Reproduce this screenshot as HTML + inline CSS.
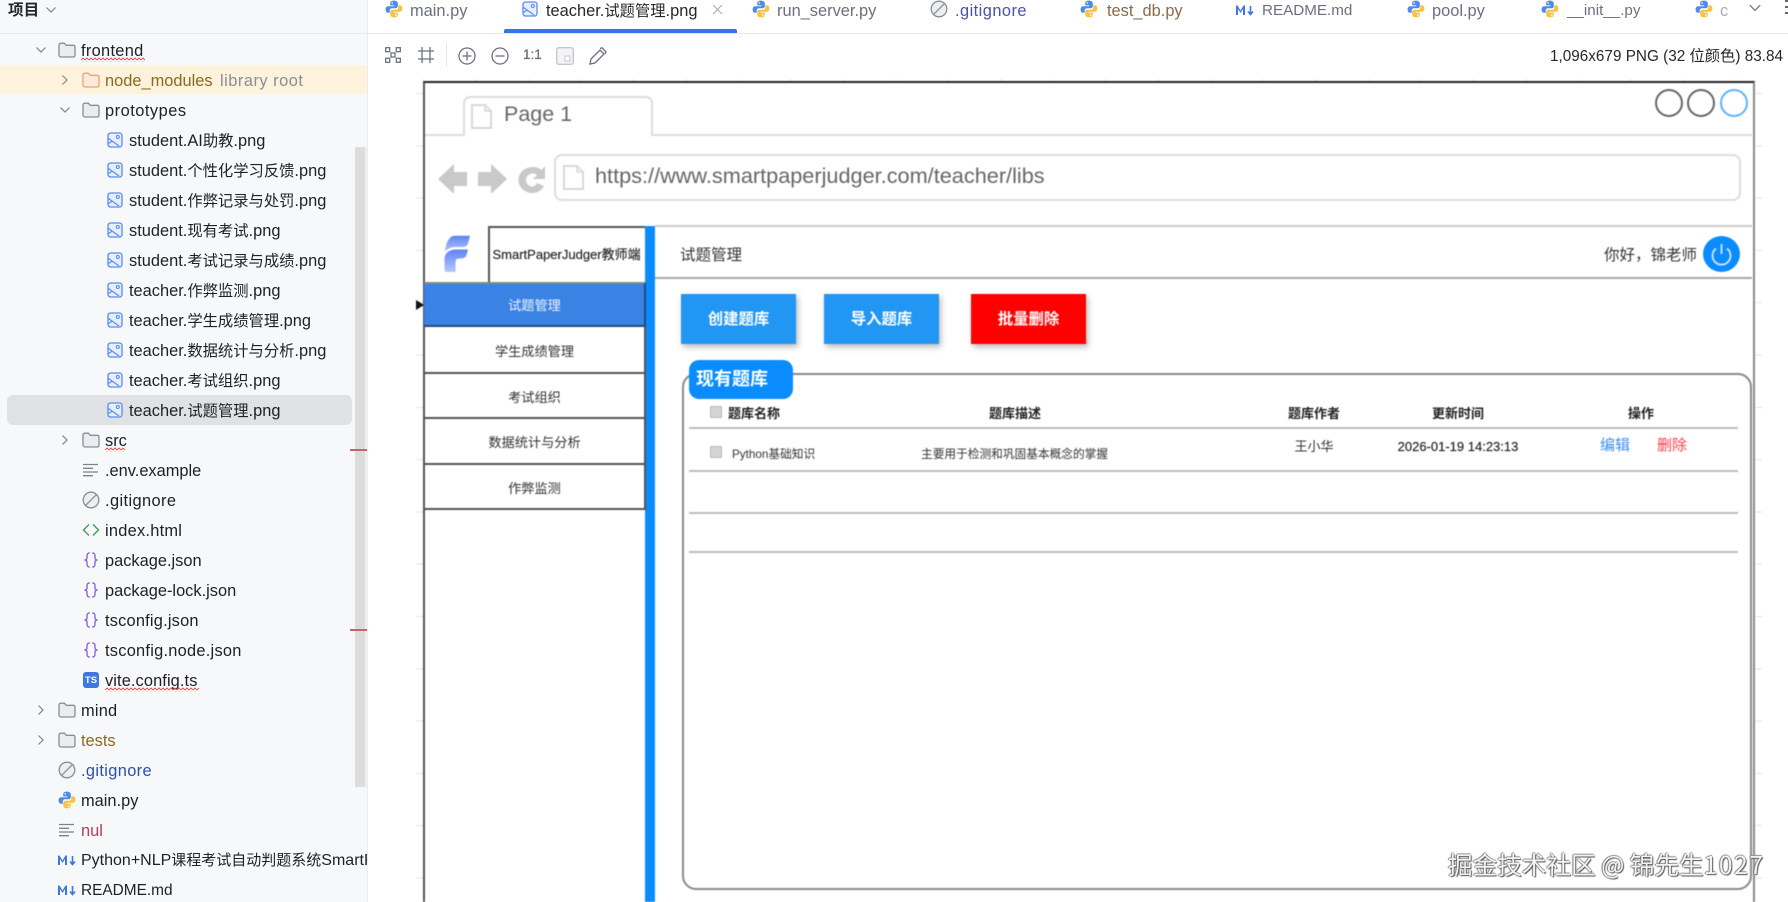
<!DOCTYPE html>
<html lang="zh-CN"><head><meta charset="utf-8"><title>teacher.试题管理.png</title>
<style>
*{box-sizing:border-box}
html,body{margin:0;padding:0;width:1788px;height:902px;overflow:hidden;background:#fff;font-family:"Liberation Sans","Noto Sans CJK SC",sans-serif;color:#1f2024}
.a{position:absolute}
.t{position:absolute;white-space:nowrap;line-height:20px;height:20px}
.c{transform:translateX(-50%)}
#side{position:absolute;left:0;top:0;width:367px;height:902px;background:#f7f8fa;overflow:hidden}
.r{position:absolute;white-space:nowrap;height:30px;line-height:32px;font-size:16.4px;color:#1f2024}
.r i,.tb i{font-style:normal;font-size:15.3px}
.ic{position:absolute}
.tb{position:absolute;top:1px;height:20px;line-height:20px;font-size:16.4px;white-space:nowrap;color:#6c707e}
#shot{position:absolute;left:0;top:0;width:1788px;height:902px;filter:blur(.45px)}
.nav{position:absolute;left:424px;width:221px;text-align:center;font-size:13.2px;color:#333}
.btn{position:absolute;top:294px;width:115px;height:50px;line-height:52px;text-align:center;color:#fff;font-weight:bold;font-size:15.4px;background:#2196f3;box-shadow:2px 3px 6px rgba(0,0,0,.28)}
.hl{position:absolute;left:689px;width:1049px;height:2px;background:#bdbdbd}
.th{font-size:13px;font-weight:bold;color:#222}
.cb{position:absolute;left:710px;width:12px;height:12px;background:#d4d4d4;border:1px solid #bbb}
</style></head><body>
<svg width="0" height="0" style="position:absolute">
<defs>
<symbol id="py" viewBox="0 0 16 16"><path fill="#4f8be6" d="M8 .6C5.2.6 4.6 1.8 4.6 3.1V4.8H8.3V5.5H2.9C1.4 5.5.5 6.6.5 8.3c0 1.9.9 3 2.3 3H4.2V9.5C4.2 8.2 5.2 7.3 6.4 7.3H9.5C10.6 7.3 11.4 6.5 11.4 5.3V3.1C11.4 1.7 10.2.6 8 .6Z"/><circle cx="6.4" cy="2.6" r=".7" fill="#fff"/><path fill="#f6c445" d="M8 15.4c2.8 0 3.4-1.2 3.4-2.5V11.2H7.7v-.7h5.4c1.5 0 2.4-1.1 2.4-2.8 0-1.9-.9-3-2.3-3H11.800v1.800c0 1.300-1 2.200-2.200 2.200H6.500c-1.100 0-1.900.8-1.900 2v2.200c0 1.400 1.200 2.500 3.400 2.500Z"/><circle cx="9.600" cy="13.400" r=".7" fill="#fff"/></symbol>
<symbol id="img" viewBox="0 0 16 16"><rect x="1" y="1" width="14" height="14" rx="2.500" fill="#e6eeff" stroke="#5a8dee" stroke-width="1.300"/><circle cx="10.800" cy="5" r="1.500" fill="none" stroke="#5a8dee" stroke-width="1.100"/><path d="M1.500 6.500 12 14" fill="none" stroke="#5a8dee" stroke-width="1.200"/><path d="M1.500 11.500 5.500 9" fill="none" stroke="#5a8dee" stroke-width="1.100"/></symbol>
<symbol id="fold" viewBox="0 0 18 16"><path d="M1 3.200C1 2 1.800 1.200 3 1.200H6.300L8.300 3.300H15C16.200 3.300 17 4.100 17 5.300V13C17 14.200 16.200 15 15 15H3C1.800 15 1 14.200 1 13Z" fill="#ebecf0" stroke="#8a8d96" stroke-width="1.300"/></symbol>
<symbol id="foldo" viewBox="0 0 18 16"><path d="M1 3.200C1 2 1.800 1.200 3 1.200H6.300L8.300 3.300H15C16.200 3.300 17 4.100 17 5.300V13C17 14.200 16.200 15 15 15H3C1.800 15 1 14.200 1 13Z" fill="#fdeadb" stroke="#f0a26c" stroke-width="1.300"/></symbol>
<symbol id="ign" viewBox="0 0 18 18"><circle cx="9" cy="9" r="7.800" fill="#eceef1" stroke="#8a8d96" stroke-width="1.300"/><path d="M3.800 14.200 14.200 3.800" stroke="#8a8d96" stroke-width="1.300"/></symbol>
<symbol id="txt" viewBox="0 0 16 14"><path d="M0 1.500H15M0 5.300H10M0 9H15M0 12.700H10" stroke="#7f828b" stroke-width="1.300" fill="none"/></symbol>
<symbol id="json" viewBox="0 0 16 16"><path d="M6.800 1C4.300 1 4 2.300 4 4V6C4 7 3.200 7.800 1.500 8 3.200 8.200 4 9 4 10V12C4 13.700 4.300 15 6.800 15M9.200 1C11.700 1 12 2.300 12 4V6C12 7 12.800 7.800 14.500 8 12.800 8.200 12 9 12 10V12C12 13.700 11.700 15 9.200 15" fill="none" stroke="#8a68d8" stroke-width="1.400"/></symbol>
<symbol id="md" viewBox="0 0 20 12"><path d="M1 11V1.500H2.500L5.500 6.500 8.500 1.500H10V11H8V5L5.500 9 3 5V11Z" fill="#3f76e0"/><path d="M15.500 2V10M13 7.500 15.500 10.500 18 7.500" fill="none" stroke="#3f76e0" stroke-width="1.600"/></symbol>
<symbol id="chd" viewBox="0 0 12 12"><path d="M1.500 3.500 6 8 10.500 3.500" fill="none" stroke="#7f828b" stroke-width="1.200"/></symbol>
<symbol id="chr" viewBox="0 0 12 12"><path d="M3.500 1.500 8 6 3.500 10.500" fill="none" stroke="#7f828b" stroke-width="1.200"/></symbol>
<symbol id="doc" viewBox="0 0 21 25"><path d="M1 1H14L20 7V24H1Z" fill="#fff" stroke="#d4d4d4" stroke-width="1.800"/><path d="M14 1V7H20" fill="#eee" stroke="#d4d4d4" stroke-width="1.200"/></symbol>
<linearGradient id="fg" x1="0" y1="0" x2="0" y2="1"><stop offset="0" stop-color="#5f83f5"/><stop offset="1" stop-color="#b5c8fb"/></linearGradient>
<pattern id="wv" width="4" height="4" patternUnits="userSpaceOnUse"><path d="M0 3 2 1 4 3" fill="none" stroke="#e5484d" stroke-width=".9"/></pattern>
</defs></svg>

<div id="side">
<div class="a" style="left:0;top:33px;width:367px;height:1px;background:#e8e9ee"></div>
<div class="a" style="left:0;top:65px;width:367px;height:29px;background:#fdf3dc"></div>
<div class="a" style="left:7px;top:395px;width:345px;height:30px;border-radius:6px;background:#dfe1e5"></div>
<div class="a" style="left:355px;top:147px;width:12px;height:640px;background:#dcdcdc;border-right:2px solid #eceef1"></div>
<div class="a" style="left:350px;top:449px;width:17px;height:2px;background:#c9616b"></div>
<div class="a" style="left:350px;top:629px;width:17px;height:2px;background:#c9616b"></div>

<div class="t" style="left:8px;top:1px;font-size:15.6px;font-weight:bold;color:#26272b">项目</div>
<svg class="ic" style="left:45px;top:4px" width="12" height="12"><use href="#chd"/></svg>

<svg class="ic" style="left:35px;top:44px" width="12" height="12"><use href="#chd"/></svg>
<svg class="ic" style="left:58px;top:42px" width="18" height="16"><use href="#fold"/></svg>
<div class="r" style="left:81px;top:35px;letter-spacing:.3px">frontend</div>
<svg class="ic" style="left:81px;top:57px" width="64" height="5"><rect width="64" height="5" fill="url(#wv)"/></svg>

<svg class="ic" style="left:59px;top:74px" width="12" height="12"><use href="#chr"/></svg>
<svg class="ic" style="left:82px;top:72px" width="18" height="16"><use href="#foldo"/></svg>
<div class="r" style="left:105px;top:65px;color:#8a6a1e">node_modules</div>
<div class="r" style="left:220px;top:65px;color:#8a8d96;letter-spacing:.5px">library root</div>

<svg class="ic" style="left:59px;top:104px" width="12" height="12"><use href="#chd"/></svg>
<svg class="ic" style="left:82px;top:102px" width="18" height="16"><use href="#fold"/></svg>
<div class="r" style="left:105px;top:95px;letter-spacing:.5px">prototypes</div>

<svg class="ic" style="left:107px;top:132px" width="16" height="16"><use href="#img"/></svg><div class="r" style="left:129px;top:125px">student.AI<i>助教</i>.png</div>
<svg class="ic" style="left:107px;top:162px" width="16" height="16"><use href="#img"/></svg><div class="r" style="left:129px;top:155px">student.<i>个性化学习反馈</i>.png</div>
<svg class="ic" style="left:107px;top:192px" width="16" height="16"><use href="#img"/></svg><div class="r" style="left:129px;top:185px">student.<i>作弊记录与处罚</i>.png</div>
<svg class="ic" style="left:107px;top:222px" width="16" height="16"><use href="#img"/></svg><div class="r" style="left:129px;top:215px">student.<i>现有考试</i>.png</div>
<svg class="ic" style="left:107px;top:252px" width="16" height="16"><use href="#img"/></svg><div class="r" style="left:129px;top:245px">student.<i>考试记录与成绩</i>.png</div>
<svg class="ic" style="left:107px;top:282px" width="16" height="16"><use href="#img"/></svg><div class="r" style="left:129px;top:275px">teacher.<i>作弊监测</i>.png</div>
<svg class="ic" style="left:107px;top:312px" width="16" height="16"><use href="#img"/></svg><div class="r" style="left:129px;top:305px">teacher.<i>学生成绩管理</i>.png</div>
<svg class="ic" style="left:107px;top:342px" width="16" height="16"><use href="#img"/></svg><div class="r" style="left:129px;top:335px">teacher.<i>数据统计与分析</i>.png</div>
<svg class="ic" style="left:107px;top:372px" width="16" height="16"><use href="#img"/></svg><div class="r" style="left:129px;top:365px">teacher.<i>考试组织</i>.png</div>
<svg class="ic" style="left:107px;top:402px" width="16" height="16"><use href="#img"/></svg><div class="r" style="left:129px;top:395px">teacher.<i>试题管理</i>.png</div>

<svg class="ic" style="left:59px;top:434px" width="12" height="12"><use href="#chr"/></svg>
<svg class="ic" style="left:82px;top:432px" width="18" height="16"><use href="#fold"/></svg>
<div class="r" style="left:105px;top:425px">src</div>
<svg class="ic" style="left:105px;top:447px" width="20" height="5"><rect width="20" height="5" fill="url(#wv)"/></svg>

<svg class="ic" style="left:83px;top:463px" width="16" height="14"><use href="#txt"/></svg>
<div class="r" style="left:105px;top:455px">.env.example</div>
<svg class="ic" style="left:82px;top:491px" width="18" height="18"><use href="#ign"/></svg>
<div class="r" style="left:105px;top:485px;letter-spacing:.4px">.gitignore</div>
<svg class="ic" style="left:82px;top:523px" width="18" height="14"><path d="M7 1.500 1.500 7 7 12.500M11 1.500 16.500 7 11 12.500" fill="none" stroke="#3f9a62" stroke-width="1.400"/></svg>
<div class="r" style="left:105px;top:515px;letter-spacing:.25px">index.html</div>
<svg class="ic" style="left:83px;top:552px" width="16" height="16"><use href="#json"/></svg>
<div class="r" style="left:105px;top:545px">package.json</div>
<svg class="ic" style="left:83px;top:582px" width="16" height="16"><use href="#json"/></svg>
<div class="r" style="left:105px;top:575px">package-lock.json</div>
<svg class="ic" style="left:83px;top:612px" width="16" height="16"><use href="#json"/></svg>
<div class="r" style="left:105px;top:605px;letter-spacing:.2px">tsconfig.json</div>
<svg class="ic" style="left:83px;top:642px" width="16" height="16"><use href="#json"/></svg>
<div class="r" style="left:105px;top:635px;letter-spacing:.25px">tsconfig.node.json</div>
<div class="a" style="left:83px;top:672px;width:16px;height:16px;border-radius:3px;background:#3f76e0;color:#fff;font-size:9.500px;font-weight:bold;line-height:17px;text-align:center">TS</div>
<div class="r" style="left:105px;top:665px;letter-spacing:.1px">vite.config.ts</div>
<svg class="ic" style="left:105px;top:687px" width="94" height="5"><rect width="94" height="5" fill="url(#wv)"/></svg>

<svg class="ic" style="left:35px;top:704px" width="12" height="12"><use href="#chr"/></svg>
<svg class="ic" style="left:58px;top:702px" width="18" height="16"><use href="#fold"/></svg>
<div class="r" style="left:81px;top:695px;letter-spacing:.2px">mind</div>
<svg class="ic" style="left:35px;top:734px" width="12" height="12"><use href="#chr"/></svg>
<svg class="ic" style="left:58px;top:732px" width="18" height="16"><use href="#fold"/></svg>
<div class="r" style="left:81px;top:725px;color:#8a6a1e">tests</div>
<svg class="ic" style="left:58px;top:761px" width="18" height="18"><use href="#ign"/></svg>
<div class="r" style="left:81px;top:755px;color:#2a50b0;letter-spacing:.35px">.gitignore</div>
<svg class="ic" style="left:58px;top:791px" width="18" height="18"><use href="#py"/></svg>
<div class="r" style="left:81px;top:785px">main.py</div>
<svg class="ic" style="left:59px;top:823px" width="16" height="14"><use href="#txt"/></svg>
<div class="r" style="left:81px;top:815px;color:#b0405a">nul</div>
<svg class="ic" style="left:57px;top:854px" width="20" height="12"><use href="#md"/></svg>
<div class="r" style="left:81px;top:845px;width:286px;overflow:hidden;font-size:16px">Python+NLP<i style="font-size:15px">课程考试自动判题系统</i>SmartPaperJudger</div>
<svg class="ic" style="left:57px;top:884px" width="20" height="12"><use href="#md"/></svg>
<div class="r" style="left:81px;top:875px;font-size:15.400px">README.md</div>
</div>
<div class="a" style="left:367px;top:0;width:1px;height:902px;background:#ebecf0"></div>

<!-- tabs -->
<div class="a" style="left:368px;top:33px;width:1420px;height:1px;background:#e8e9ee"></div>
<div class="a" style="left:504px;top:29px;width:233px;height:4px;border-radius:2px 2px 0 0;background:#3574f0"></div>
<svg class="ic" style="left:385px;top:0" width="18" height="18"><use href="#py"/></svg><div class="tb" style="left:410px">main.py</div>
<svg class="ic" style="left:522px;top:1px" width="16" height="16"><use href="#img"/></svg><div class="tb" style="left:546px;color:#26272b">teacher.<i>试题管理</i>.png</div>
<svg class="ic" style="left:712px;top:4px" width="11" height="11"><path d="M1 1 10 10M10 1 1 10" stroke="#a8adbd" stroke-width="1.100"/></svg>
<svg class="ic" style="left:752px;top:0" width="18" height="18"><use href="#py"/></svg><div class="tb" style="left:777px">run_server.py</div>
<svg class="ic" style="left:930px;top:0" width="18" height="18"><use href="#ign"/></svg><div class="tb" style="left:955px;color:#4a52ad;letter-spacing:.45px">.gitignore</div>
<svg class="ic" style="left:1080px;top:0" width="18" height="18"><use href="#py"/></svg><div class="tb" style="left:1107px;color:#8a6a4a">test_db.py</div>
<svg class="ic" style="left:1235px;top:4px" width="20" height="12"><use href="#md"/></svg><div class="tb" style="left:1262px;font-size:15.2px">README.md</div>
<svg class="ic" style="left:1407px;top:0" width="18" height="18"><use href="#py"/></svg><div class="tb" style="left:1432px">pool.py</div>
<svg class="ic" style="left:1541px;top:0" width="18" height="18"><use href="#py"/></svg><div class="tb" style="left:1567px;font-size:15.2px">__init__.py</div>
<svg class="ic" style="left:1695px;top:0" width="18" height="18"><use href="#py"/></svg><div class="tb" style="left:1720px;color:#aab">c</div>
<svg class="ic" style="left:1748px;top:1px" width="14" height="14"><use href="#chd"/></svg>
<div class="a" style="left:1785px;top:0;width:3px;height:15px;background:repeating-linear-gradient(#666 0 2px,transparent 2px 6px)"></div>

<!-- toolbar -->
<svg class="ic" style="left:385px;top:47px" width="16" height="16" fill="none" stroke="#6c707e" stroke-width="1.300"><rect x=".7" y=".7" width="4" height="4"/><rect x="11.300" y=".7" width="4" height="4"/><rect x=".7" y="11.300" width="4" height="4"/><rect x="11.300" y="11.300" width="4" height="4"/><rect x="6" y="6" width="4" height="4"/></svg>
<svg class="ic" style="left:418px;top:47px" width="16" height="16" fill="none" stroke="#6c707e" stroke-width="1.300"><path d="M4 0V16M12 0V16M0 4H16M0 12H16"/></svg>
<div class="a" style="left:446px;top:44px;width:1px;height:23px;background:#e4e5ea"></div>
<svg class="ic" style="left:458px;top:47px" width="18" height="18" fill="none" stroke="#6c707e" stroke-width="1.300"><circle cx="9" cy="9" r="8"/><path d="M4.500 9H13.500M9 4.500V13.500"/></svg>
<svg class="ic" style="left:491px;top:47px" width="18" height="18" fill="none" stroke="#6c707e" stroke-width="1.300"><circle cx="9" cy="9" r="8"/><path d="M4.500 9H13.500"/></svg>
<div class="t" style="left:523px;top:45px;font-size:13.500px;color:#6c707e;-webkit-text-stroke:.3px #6c707e">1:1</div>
<svg class="ic" style="left:556px;top:47px" width="18" height="18" fill="#f4f4f4" stroke="#c4c6cc" stroke-width="1.300"><rect x=".7" y=".7" width="16.600" height="16.600" rx="2"/><rect x="9" y="9" width="5" height="5" fill="#fff" stroke-width="1"/></svg>
<svg class="ic" style="left:589px;top:47px" width="18" height="18" fill="none" stroke="#6c707e" stroke-width="1.300"><path d="M1 17 2 12 11 3 15 7 6 16ZM11 1.500 13 .8 17 5 16 7 "/></svg>
<div class="t" style="left:1550px;top:47px;font-size:15.300px;color:#26272b">1,096x679 PNG (32 位颜色) 83.84</div>

<!-- screenshot in viewer -->
<div id="shot">
<div class="a" style="left:423px;top:79px;width:1330px;height:3px;background:repeating-linear-gradient(90deg,#e4e4e4 0 1px,transparent 1px 52.500px)"></div>
<div class="a" style="left:416px;top:93px;width:7px;height:800px;background:repeating-linear-gradient(#e4e4e4 0 1px,transparent 1px 52.300px)"></div>
<div class="a" style="left:1755px;top:93px;width:7px;height:800px;background:repeating-linear-gradient(#e4e4e4 0 1px,transparent 1px 52.300px)"></div>
<div class="a" style="left:423px;top:81px;width:1332px;height:821px;background:#fff;border:2px solid #555;border-top-color:#222;border-bottom:0;border-right-color:#8a8a8a"></div>

<!-- browser chrome -->
<div class="a" style="left:425px;top:134px;width:1327px;height:2px;background:#ddd"></div>
<div class="a" style="left:463px;top:96px;width:190px;height:40px;background:#fff;border:2px solid #ddd;border-bottom:0;border-radius:7px 7px 0 0"></div>
<svg class="ic" style="left:471px;top:104px" width="21" height="25"><use href="#doc"/></svg>
<div class="t" style="left:504px;top:104px;font-size:21.500px;color:#666">Page 1</div>
<div class="a" style="left:1655px;top:89px;width:28px;height:28px;border-radius:50%;border:2px solid #666"></div>
<div class="a" style="left:1687px;top:89px;width:28px;height:28px;border-radius:50%;border:2px solid #666"></div>
<div class="a" style="left:1720px;top:89px;width:28px;height:28px;border-radius:50%;border:2px solid #5ab4ff"></div>
<svg class="ic" style="left:437px;top:163px" width="110" height="32" fill="#c9c9c9"><path d="M1 16 17 1V9H30V23H17V31Z"/><path d="M70 16 54 1V9H41V23H54V31Z"/><path d="M96 4C88 4 81.500 9.500 81.500 17S88 30 95.500 30C101 30 105 27 107 23L100 20C99 22 97.500 23.500 95.500 23.500 92 23.500 89 20.500 89 17S92 10.500 96 10.500C98 10.500 99 11.300 100 12.500L95.500 16H108V3L104.500 7C102.500 5 99.500 4 96 4Z"/></svg>
<div class="a" style="left:554px;top:154px;width:1187px;height:47px;border:2px solid #ddd;border-radius:8px;background:#fff"></div>
<svg class="ic" style="left:563px;top:165px" width="21" height="25"><use href="#doc"/></svg>
<div class="t" style="left:595px;top:166px;font-size:21.700px;color:#666">https://www.smartpaperjudger.com/teacher/libs</div>

<!-- app header -->
<div class="a" style="left:655px;top:225px;width:1097px;height:2px;background:#ccc"></div>
<div class="a" style="left:655px;top:277px;width:1097px;height:2px;background:#a8a8a8"></div>
<div class="a" style="left:489px;top:226px;width:157px;height:2px;background:#555"></div>
<div class="a" style="left:488px;top:226px;width:2px;height:56px;background:#555"></div>
<svg class="ic" style="left:444px;top:235px" width="26" height="37"><path fill="url(#fg)" d="M6 3C7 1.500 9 .8 11 .8H26L24 8.500C23 11 21 12 18 12H12C7 12 3 14 1 17 1.500 11 3 6 6 3Z"/><path fill="url(#fg)" d="M12 14.500H24L22.500 20C22 22 20 23.500 17.500 23.500H15C12.500 23.500 11.800 25 11.500 27V37H3.500C1.500 37 .5 36 .5 34V24C.5 18.500 5 14.500 12 14.500Z"/></svg>
<div class="t" style="left:492.500px;top:245px;font-size:13px;color:#222;-webkit-text-stroke:.15px #222">SmartPaperJudger教师端</div>
<div class="t" style="left:680px;top:246px;font-size:15.500px;color:#333">试题管理</div>
<div class="t" style="left:1604px;top:246px;font-size:15.500px;color:#333">你好，锦老师</div>
<div class="a" style="left:1703px;top:236px;width:37px;height:36px;border-radius:50%;background:#0a8cff"></div>
<svg class="ic" style="left:1703px;top:236px" width="37" height="36" fill="none" stroke="#cfe8ff" stroke-width="1.800"><path d="M18.500 8V18"/><path d="M13 12.500A9 9 0 1 0 24 12.500"/></svg>

<!-- nav -->
<div class="a" style="left:645px;top:226px;width:10px;height:676px;background:#0a8cff"></div>
<svg class="ic" style="left:416px;top:300px" width="8" height="10"><path d="M0 0 8 5 0 10Z" fill="#111"/></svg>
<div class="a" style="left:424px;top:282px;width:222px;height:45px;background:#3a82e4;border-top:2px solid #888;border-bottom:2px solid #234a80;border-right:2px solid #234a80"></div>
<div class="nav" style="top:296px;color:#eef4ff;line-height:20px">试题管理</div>
<div class="a" style="left:424px;top:372px;width:221px;height:2px;background:#555"></div>
<div class="nav" style="top:342px;line-height:20px">学生成绩管理</div>
<div class="a" style="left:424px;top:417px;width:221px;height:2px;background:#555"></div>
<div class="nav" style="top:388px;line-height:20px">考试组织</div>
<div class="a" style="left:424px;top:463px;width:221px;height:2px;background:#555"></div>
<div class="nav" style="top:433px;line-height:20px">数据统计与分析</div>
<div class="a" style="left:424px;top:508px;width:221px;height:2px;background:#555"></div>
<div class="nav" style="top:479px;line-height:20px">作弊监测</div>
<div class="a" style="left:644px;top:327px;width:2px;height:183px;background:#555"></div>

<!-- buttons -->
<div class="btn" style="left:681px">创建题库</div>
<div class="btn" style="left:824px">导入题库</div>
<div class="btn" style="left:971px;background:#ff0000">批量删除</div>

<!-- panel -->
<div class="a" style="left:682px;top:373px;width:1070px;height:517px;border:2px solid #8a8a8a;border-radius:14px;background:#fff"></div>
<div class="a" style="left:689px;top:360px;width:104px;height:39px;border-radius:10px;background:#0a8cff"></div>
<div class="t" style="left:696px;top:369px;font-size:18px;font-weight:bold;color:#fff">现有题库</div>

<div class="cb" style="top:406px"></div>
<div class="t th" style="left:728px;top:404px">题库名称</div>
<div class="t th c" style="left:1015px;top:404px">题库描述</div>
<div class="t th c" style="left:1314px;top:404px">题库作者</div>
<div class="t th c" style="left:1458px;top:404px">更新时间</div>
<div class="t th c" style="left:1641px;top:404px">操作</div>
<div class="hl" style="top:427px"></div>

<div class="cb" style="top:446px"></div>
<div class="t" style="left:732px;top:445px;font-size:11.700px;color:#333">Python基础知识</div>
<div class="t" style="left:921px;top:445px;font-size:11.700px;color:#333">主要用于检测和巩固基本概念的掌握</div>
<div class="t c" style="left:1314px;top:437px;font-size:13px;color:#333">王小华</div>
<div class="t c" style="left:1458px;top:437px;font-size:13px;color:#222;-webkit-text-stroke:.15px #222">2026-01-19 14:23:13</div>
<div class="t c" style="left:1615px;top:436px;font-size:15px;color:#3c8ff0">编辑</div>
<div class="t c" style="left:1672px;top:436px;font-size:15px;color:#ff3b4a">删除</div>
<div class="hl" style="top:470px"></div>
<div class="hl" style="top:512px"></div>
<div class="hl" style="top:551px"></div>
</div>

<!-- watermark -->
<div class="t" style="left:1448px;top:851px;height:26px;line-height:26px;font-size:24.600px;font-family:'Noto Sans CJK SC','Liberation Sans',sans-serif;color:#f2f2f2;text-shadow:1px 1px 1px #555,-1px 0 1px #777,0 -1px 1px #999">掘金技术社区 @ 锦先生<span style="letter-spacing:1.600px">1027</span></div>
</body></html>
